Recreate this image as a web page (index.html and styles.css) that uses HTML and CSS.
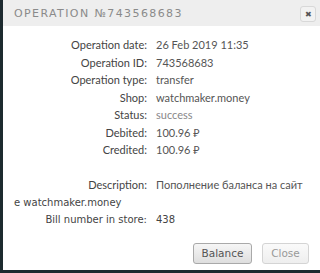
FILE: index.html
```html
<html>
<head>
    <link rel="stylesheet" href="styles.css">
</head>
<body>
<div class="modal">
    <div class="modalHead">
        <span class="title">Operation №743568683</span>
        <span class="closeX">&#x2716;</span>
    </div>
    <div class="modalBody">
        <div class="row"><span class="lbl">Operation date:</span><span class="val">26 Feb 2019 11:35</span></div>
        <div class="row"><span class="lbl">Operation ID:</span><span class="val">743568683</span></div>
        <div class="row"><span class="lbl">Operation type:</span><span class="val">transfer</span></div>
        <div class="row"><span class="lbl">Shop:</span><span class="val">watchmaker.money</span></div>
        <div class="row"><span class="lbl">Status:</span><span class="val light">success</span></div>
        <div class="row"><span class="lbl">Debited:</span><span class="val">100.96 &#x20BD;</span></div>
        <div class="row"><span class="lbl">Credited:</span><span class="val">100.96 &#x20BD;</span></div>
        <div class="row"></div>
        <div class="row wrap"><span class="lbl">Description:</span><span class="val">Пополнение баланса на сайт</span><span class="plain">e watchmaker.money</span></div>
        <div class="row"><span class="lbl plain">Bill number in store:</span><span class="val plain">438</span></div>
    </div>
    <div class="modalFoot">
        <button class="btn">Balance</button>
        <button class="btn off">Close</button>
    </div>
</div>
</body>
</html>
```

FILE: styles.css
```css
body {
    margin: 0;
    background: #1d2a2f;
    height: 273px;
    overflow: hidden;
}
.modal {
    margin-left: 3px;
    width: 317px;
    height: 270px;
    background: #ffffff;
    font-family: Lato, "Noto Sans", sans-serif;
    font-size: 11px;
    color: #444;
}
.modalHead {
    height: 26px;
    background: #eeeeee;
    display: flex;
    align-items: center;
    justify-content: space-between;
    padding: 0 4px 0 11px;
}
.title {
    text-transform: uppercase;
    letter-spacing: 1.4px;
    font-family: "DejaVu Sans", sans-serif;
    font-size: 11px;
    color: #8a8a8a;
    padding-top: 1px;
}
.closeX {
    width: 14px;
    height: 14px;
    border: 1px solid #d8d8d8;
    border-radius: 3px;
    background: #f2f2f2;
    color: #555;
    font-size: 8px;
    display: flex;
    align-items: center;
    justify-content: center;
    margin-top: 1px;
}
.modalBody {
    padding: 10px 0 0 11px;
}
.row {
    height: 17.5px;
    line-height: 17.5px;
    white-space: nowrap;
}
.row.wrap {
    height: 35px;
    white-space: normal;
}
.lbl {
    display: inline-block;
    width: 133px;
    text-align: right;
    margin-right: 9px;
    color: #444;
}
.val {
    color: #555;
}
.light {
    color: #888;
}
.plain {
    font-family: "DejaVu Sans", sans-serif;
    font-size: 10px;
    color: #444;
}
.wrap .plain {
    display: block;
}
.modalFoot {
    display: flex;
    justify-content: flex-end;
    gap: 10px;
    padding: 14px 11px 0 0;
}
.btn {
    width: 59px;
    height: 21px;
    padding: 0;
    border: 1px solid #a9a9a9;
    border-radius: 3px;
    background: linear-gradient(#f6f6f6, #dedede);
    font-family: "DejaVu Sans", sans-serif;
    font-size: 10.5px;
    color: #555;
}
.btn.off {
    width: 47px;
    border-color: #d4d4d4;
    background: linear-gradient(#fafafa, #eeeeee);
    color: #999;
}
```
